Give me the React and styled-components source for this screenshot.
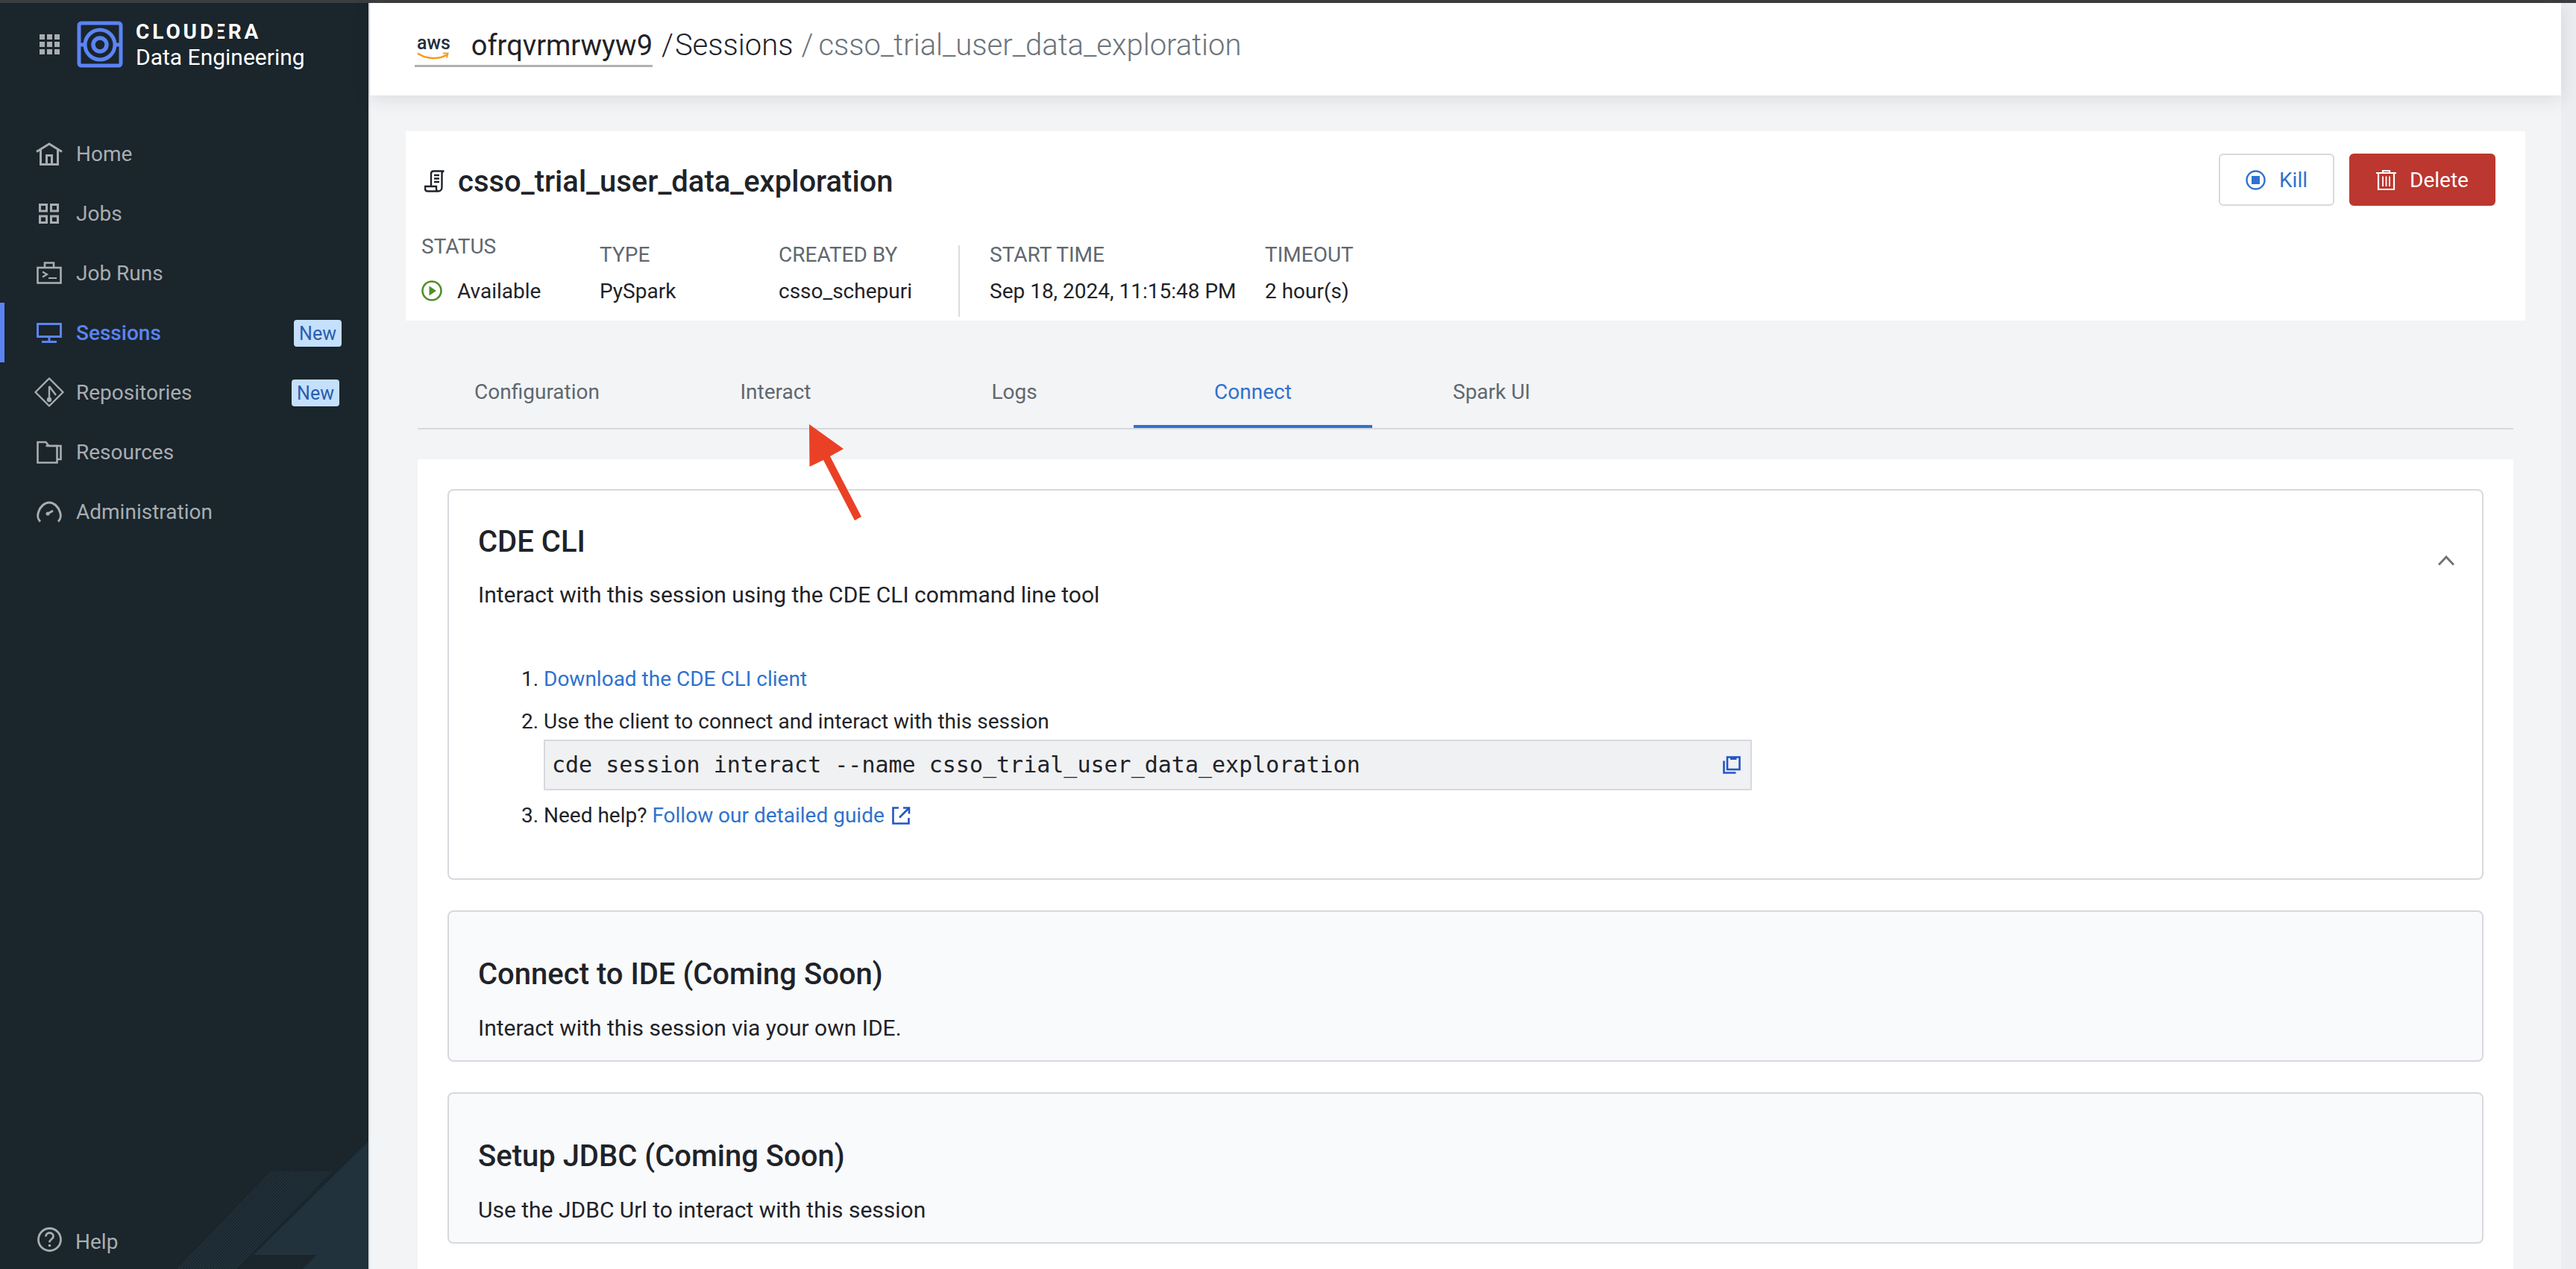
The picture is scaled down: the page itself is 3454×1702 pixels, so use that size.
import styled, { createGlobalStyle } from "styled-components";

const GlobalStyle = createGlobalStyle`
    * {
        box-sizing: border-box;
    }
    html, body {
        margin: 0;
        padding: 0;
        height: 100%;
        overflow: hidden;
        background: #f3f4f6;
        font-family: Roboto, "Liberation Sans", sans-serif;
    }
`;

const navItems = [
    { label: "Home", icon: <HomeIcon /> },
    { label: "Jobs", icon: <JobsIcon /> },
    { label: "Job Runs", icon: <JobRunsIcon /> },
    { label: "Sessions", icon: <SessionsIcon />, active: true, badge: 458 },
    { label: "Repositories", icon: <RepoIcon />, badge: 455 },
    { label: "Resources", icon: <FolderIcon /> },
    { label: "Administration", icon: <GaugeIcon /> },
];

const tabs = ["Configuration", "Interact", "Logs", "Connect", "Spark UI"];

const meta = [
    { label: "TYPE", value: "PySpark" },
    { label: "CREATED BY", value: "csso_schepuri" },
];

export default function App() {
    return (
        <Page>
            <GlobalStyle />
            <TopStrip />
            <Shell>
                <Sidebar>
                    <Corner />
                    <Brand>
                        <DotsIcon />
                        <LogoIcon />
                        <BrandText>
                            <BrandName>CLOUD<BrandE>E</BrandE>RA</BrandName>
                            <BrandProduct>Data Engineering</BrandProduct>
                        </BrandText>
                    </Brand>
                    <Nav>
                        {navItems.map((item) => (
                            <NavItem key={item.label} $active={item.active}>
                                <NavIcon>{item.icon}</NavIcon>
                                {item.label}
                                {item.badge && <Badge $right={item.badge}>New</Badge>}
                            </NavItem>
                        ))}
                    </Nav>
                    <HelpRow>
                        <HelpIcon />
                        <HelpLabel>Help</HelpLabel>
                    </HelpRow>
                </Sidebar>
                <Main>
                    <Header>
                        <EnvCrumb>
                            <AwsMark>
                                <AwsText>aws</AwsText>
                                <AwsSmile />
                            </AwsMark>
                            ofrqvrmrwyw9
                        </EnvCrumb>
                        <Crumb $gap={12}>/</Crumb>
                        <Crumb $gap={2}>Sessions</Crumb>
                        <Crumb $gap={11} $muted>/</Crumb>
                        <Crumb $gap={7} $muted>csso_trial_user_data_exploration</Crumb>
                    </Header>
                    <Content>
                        <SessionCard>
                            <TitleRow>
                                <SessionTitle>
                                    <ScrollIcon />
                                    csso_trial_user_data_exploration
                                </SessionTitle>
                                <Actions>
                                    <KillButton><StopIcon />Kill</KillButton>
                                    <DeleteButton><TrashIcon />Delete</DeleteButton>
                                </Actions>
                            </TitleRow>
                            <MetaRow>
                                <MetaCol>
                                    <MetaLabel $lift>STATUS</MetaLabel>
                                    <MetaValue><PlayIcon />Available</MetaValue>
                                </MetaCol>
                                {meta.map((m) => (
                                    <MetaCol key={m.label}>
                                        <MetaLabel>{m.label}</MetaLabel>
                                        <MetaValue>{m.value}</MetaValue>
                                    </MetaCol>
                                ))}
                                <MetaCol $divided>
                                    <MetaLabel>START TIME</MetaLabel>
                                    <MetaValue>Sep 18, 2024, 11:15:48 PM</MetaValue>
                                </MetaCol>
                                <MetaCol>
                                    <MetaLabel>TIMEOUT</MetaLabel>
                                    <MetaValue>2 hour(s)</MetaValue>
                                </MetaCol>
                            </MetaRow>
                        </SessionCard>
                        <TabBar>
                            {tabs.map((t) => (
                                <Tab key={t} $active={t === "Connect"}>{t}</Tab>
                            ))}
                        </TabBar>
                        <Panel>
                            <OpenCard>
                                <CardHead>
                                    <div>
                                        <CardTitle>CDE CLI</CardTitle>
                                        <CardText $tight>Interact with this session using the CDE CLI command line tool</CardText>
                                    </div>
                                    <ChevronIcon />
                                </CardHead>
                                <Steps>
                                    <Step><Link>Download the CDE CLI client</Link></Step>
                                    <Step>
                                        Use the client to connect and interact with this session
                                        <CodeBox>
                                            <code>cde session interact --name csso_trial_user_data_exploration</code>
                                            <CopyIcon />
                                        </CodeBox>
                                    </Step>
                                    <Step>Need help? <Link>Follow our detailed guide</Link> <ExternalIcon /></Step>
                                </Steps>
                            </OpenCard>
                            <SoonCard>
                                <CardTitle>Connect to IDE (Coming Soon)</CardTitle>
                                <CardText>Interact with this session via your own IDE.</CardText>
                            </SoonCard>
                            <SoonCard>
                                <CardTitle>Setup JDBC (Coming Soon)</CardTitle>
                                <CardText>Use the JDBC Url to interact with this session</CardText>
                            </SoonCard>
                        </Panel>
                    </Content>
                </Main>
                <ScrollTrack />
            </Shell>
            <Arrow />
        </Page>
    );
}

function DotsIcon() {
    const cells = [];
    for (let r = 0; r < 3; r++) {
        for (let c = 0; c < 3; c++) {
            cells.push(<rect key={`${r}${c}`} x={c * 10} y={r * 10} width="7" height="7" fill="#a9adb0" />);
        }
    }
    return <DotsSvg viewBox="0 0 27 27">{cells}</DotsSvg>;
}

function LogoIcon() {
    return (
        <LogoSvg viewBox="0 0 62 63" fill="none" stroke="#5b84f2">
            <rect x="3" y="3" width="56" height="57" rx="3" strokeWidth="5" />
            <path d="M3 32H10M52 32H59" strokeWidth="5" />
            <circle cx="31" cy="32" r="20" strokeWidth="5" />
            <circle cx="31" cy="32" r="9" strokeWidth="5.5" />
        </LogoSvg>
    );
}

function HomeIcon() {
    return (
        <svg width="36" height="31" viewBox="0 0 36 31" fill="none" stroke="currentColor" strokeWidth="3">
            <path d="M1 12.5L18 2l17 10.5" />
            <path d="M6.5 10v19.5h23V10" />
            <path d="M14.5 29V17.5h7V29" />
        </svg>
    );
}

function JobsIcon() {
    return (
        <svg width="27" height="27" viewBox="0 0 27 27" fill="none" stroke="currentColor" strokeWidth="3">
            <rect x="1.5" y="1.5" width="9" height="8.5" />
            <rect x="16.5" y="1.5" width="9" height="8.5" />
            <rect x="1.5" y="17" width="9" height="8.5" />
            <rect x="16.5" y="17" width="9" height="8.5" />
        </svg>
    );
}

function JobRunsIcon() {
    return (
        <svg width="34" height="30" viewBox="0 0 34 30" fill="none" stroke="currentColor" strokeWidth="2.6">
            <rect x="1.5" y="8" width="31" height="20.5" />
            <path d="M11 8V1.5h12V8" />
            <path d="M8 13.5l6 3.5-6 3.5M16 22h11" strokeWidth="2.2" />
        </svg>
    );
}

function SessionsIcon() {
    return (
        <svg width="34" height="27" viewBox="0 0 34 27" fill="none" stroke="currentColor" strokeWidth="3">
            <rect x="1.5" y="1.5" width="31" height="17" />
            <path d="M17 19v5M7 25.5h20" />
        </svg>
    );
}

function RepoIcon() {
    return (
        <svg width="40" height="40" viewBox="0 0 40 40" fill="none" stroke="currentColor" strokeWidth="2.4">
            <path d="M20 1.5L38.5 20 20 38.5 1.5 20z" strokeLinejoin="round" />
            <path d="M20 12v18M20 12l9 12" />
            <circle cx="20" cy="30" r="2" fill="currentColor" />
        </svg>
    );
}

function FolderIcon() {
    return (
        <svg width="34" height="31" viewBox="0 0 34 31" fill="none" stroke="currentColor" strokeWidth="2.6">
            <path d="M1.5 29.5V2h11l4 5h11v22.5z" />
            <path d="M12.5 7H32.5V25h-5" />
        </svg>
    );
}

function GaugeIcon() {
    return (
        <svg width="34" height="29" viewBox="0 0 34 29" fill="none" stroke="currentColor" strokeWidth="3">
            <path d="M5 27.5C1 24 1.5 18 2.5 15 5 7 11 2 17 2s12 5 14.500 13c1 3 1.500 9-2.500 12.500" />
            <path d="M15 17l7-4" strokeWidth="3" />
            <circle cx="15" cy="17" r="2.500" fill="currentColor" stroke="none" />
        </svg>
    );
}

function HelpIcon() {
    return (
        <HelpSvg viewBox="0 0 33 33" fill="none" stroke="#a9adb0" strokeWidth="2.8">
            <circle cx="16.500" cy="16.500" r="15" />
            <path d="M11.500 12.500c0-3 2.300-5 5-5s5 2 5 4.700c0 3.800-5 3.800-5 8" />
            <circle cx="16.500" cy="24.500" r="1.800" fill="#a9adb0" stroke="none" />
        </HelpSvg>
    );
}

function AwsSmile() {
    return (
        <SmileSvg viewBox="0 0 44 10" fill="none" stroke="#f79a1c" strokeWidth="2.600">
            <path d="M1 1.500C12 9.500 30 10 40 3.500" />
            <path d="M35 1.500l6.500 0-1.500 6" strokeWidth="2" />
        </SmileSvg>
    );
}

function ScrollIcon() {
    return (
        <ScrollSvg viewBox="0 0 30 30" fill="none" stroke="#1f2328" strokeWidth="2.400">
            <path d="M9 22V5c0-2 1.500-3.500 3.500-3.500h14c-1.800 0-3 1.500-3 3.500v18c0 3-2 5.500-5 5.500H4.500c-2 0-3.500-1.500-3.500-3.500V22h15v3c0 2 1 3.500 2.500 3.500" />
            <path d="M13 7h7M13 11.500h7M13 16h7" />
        </ScrollSvg>
    );
}

function PlayIcon() {
    return (
        <PlaySvg viewBox="0 0 28 28">
            <circle cx="14" cy="14" r="12.500" fill="none" stroke="#4f8f29" strokeWidth="2.600" />
            <path d="M10.500 7.500L20 14l-9.500 6.500z" fill="#4f8f29" />
        </PlaySvg>
    );
}

function StopIcon() {
    return (
        <ButtonSvg viewBox="0 0 27 27">
            <circle cx="13.500" cy="13.500" r="12" fill="none" stroke="#2f72cf" strokeWidth="2.400" />
            <rect x="8" y="8" width="11" height="11" fill="#2f72cf" />
        </ButtonSvg>
    );
}

function TrashIcon() {
    return (
        <ButtonSvg viewBox="0 0 27 27" fill="none" stroke="#fff" strokeWidth="2.200">
            <path d="M0 4h27M9 3.500V1h9v2.500" />
            <path d="M3 4v22h21V4" />
            <path d="M9 8.500v13.500M13.500 8.500v13.500M18 8.500v13.500" strokeWidth="1.800" />
        </ButtonSvg>
    );
}

function ChevronIcon() {
    return (
        <ChevronSvg viewBox="0 0 22 14" fill="none" stroke="#6f7478" strokeWidth="3">
            <path d="M1 12.500L11 2l10 10.500" />
        </ChevronSvg>
    );
}

function CopyIcon() {
    return (
        <CopySvg viewBox="0 0 24 24" fill="none" stroke="#2456c4" strokeWidth="2.600">
            <path d="M1.500 6.500v16h16" />
            <rect x="6" y="1.500" width="16.500" height="16.500" />
            <path d="M10 1.500h8.500v3.500H10z" fill="#2456c4" stroke="none" />
        </CopySvg>
    );
}

function ExternalIcon() {
    return (
        <ExternalSvg viewBox="0 0 25 24" fill="none" stroke="#2456c4" strokeWidth="2.600">
            <path d="M9 1.500H1.500v21h21V15" />
            <path d="M10 14.500L22.500 2M15 1.500h8v8" />
        </ExternalSvg>
    );
}

function Corner() {
    const stripes = [];
    for (let i = 0; i < 20; i++) {
        stripes.push(<line key={i} x1={171 + i * 4.150} y1="40" x2={45 + i * 4} y2="171" />);
    }
    return (
        <CornerSvg viewBox="0 0 300 171">
            <g stroke="#22323c" strokeWidth="1.700">{stripes}</g>
            <path d="M300 0L146 152h85l-19 19h88z" fill="#22323c" />
        </CornerSvg>
    );
}

function Arrow() {
    return (
        <ArrowSvg viewBox="0 0 80 130">
            <path d="M5 0L51 33 33 43 75 124 66 129 24 48 5.500 57z" fill="#ea4126" />
        </ArrowSvg>
    );
}

const Page = styled.div`
    position: relative;
    height: 1702px;
    display: flex;
    flex-direction: column;
    overflow: hidden;
`;

const TopStrip = styled.div`
    height: 4px;
    flex: none;
    background: #3b3d3f;
`;

const Shell = styled.div`
    flex: 1;
    display: flex;
    min-height: 0;
`;

const Sidebar = styled.aside`
    position: relative;
    flex: none;
    width: 496px;
    display: flex;
    flex-direction: column;
    background: #1a252c;
    border-right: 2px solid #dfe0e3;
    overflow: hidden;
`;

const CornerSvg = styled.svg`
    position: absolute;
    right: 0;
    bottom: 0;
    width: 300px;
    height: 171px;
`;

const Brand = styled.div`
    height: 162px;
    flex: none;
    display: flex;
    align-items: flex-start;
    padding: 24px 0 0 53px;
`;

const DotsSvg = styled.svg`
    width: 27px;
    height: 27px;
    margin: 18px 23px 0 0;
`;

const LogoSvg = styled.svg`
    width: 62px;
    height: 63px;
    margin-right: 17px;
`;

const BrandText = styled.div`
    display: flex;
    flex-direction: column;
    color: #fff;
`;

const BrandName = styled.div`
    font-size: 28px;
    line-height: 28px;
    margin-top: 1px;
    font-weight: 700;
    letter-spacing: 3.9px;
`;

const BrandE = styled.span`
    position: relative;
    margin-left: -4px;
    &::before {
        content: "";
        position: absolute;
        left: 0;
        top: 0;
        bottom: 0;
        width: 6px;
        background: #1a252c;
    }
`;

const BrandProduct = styled.div`
    font-size: 30px;
    line-height: 36px;
    margin-top: 2px;
`;

const Nav = styled.nav`
    display: flex;
    flex-direction: column;
`;

const NavItem = styled.div`
    position: relative;
    height: 80px;
    display: flex;
    align-items: center;
    font-size: 28px;
    font-weight: ${(p) => (p.$active ? 500 : 400)};
    color: ${(p) => (p.$active ? "#5b84f2" : "#a9adb0")};
    border-left: 6px solid ${(p) => (p.$active ? "#5b84f2" : "transparent")};
`;

const NavIcon = styled.span`
    width: 96px;
    padding-left: 23px;
    display: flex;
    justify-content: center;
`;

const Badge = styled.span`
    position: absolute;
    top: 23px;
    left: ${(p) => p.$right - 70}px;
    width: 64px;
    height: 36px;
    display: flex;
    align-items: center;
    justify-content: center;
    background: #c4e0fd;
    border-radius: 4px;
    color: #2a5caa;
    font-size: 25px;
    font-weight: 400;
`;

const HelpRow = styled.div`
    position: relative;
    margin-top: auto;
    padding: 0 0 20px 50px;
    display: flex;
    align-items: center;
    gap: 18px;
    font-size: 28px;
    color: #a9adb0;
`;

const HelpLabel = styled.span`
    margin-top: 6px;
`;

const HelpSvg = styled.svg`
    width: 33px;
    height: 33px;
`;

const Main = styled.main`
    flex: 1;
    min-width: 0;
    display: flex;
    flex-direction: column;
`;

const Header = styled.header`
    position: relative;
    height: 124px;
    flex: none;
    display: flex;
    align-items: flex-start;
    padding: 36px 0 0 60px;
    background: #fff;
    box-shadow: 0 4px 24px rgba(30, 40, 50, 0.12);
    font-size: 40px;
    font-weight: 300;
    line-height: 42px;
    color: #1f2328;
`;

const EnvCrumb = styled.div`
    display: flex;
    align-items: flex-start;
    height: 50px;
    width: 319px;
    font-size: 38px;
    font-weight: 400;
    border-bottom: 3px solid #aeb2b6;
`;

const AwsMark = styled.div`
    width: 78px;
    padding-left: 3px;
    display: flex;
    flex-direction: column;
    align-items: flex-start;
`;

const AwsText = styled.span`
    font-size: 25px;
    line-height: 20px;
    margin-top: 8px;
    font-weight: 500;
    color: #232f3e;
`;

const SmileSvg = styled.svg`
    width: 44px;
    height: 10px;
    margin-top: 2px;
`;

const Crumb = styled.span`
    margin-left: ${(p) => p.$gap}px;
    color: ${(p) => (p.$muted ? "#6b747b" : "#1f2328")};
`;

const Content = styled.div`
    flex: 1;
    min-height: 0;
    padding: 48px 48px 0;
    display: flex;
    flex-direction: column;
    background: #f3f4f6;
`;

const SessionCard = styled.section`
    height: 254px;
    flex: none;
    padding: 30px 40px 5px 21px;
    display: flex;
    flex-direction: column;
    background: #fff;
`;

const TitleRow = styled.div`
    height: 70px;
    flex: none;
    display: flex;
    align-items: center;
    justify-content: space-between;
`;

const SessionTitle = styled.h1`
    margin: 4px 0 0 4px;
    display: flex;
    align-items: center;
    gap: 15px;
    font-size: 40px;
    font-weight: 500;
    color: #1f2328;
`;

const ScrollSvg = styled.svg`
    width: 30px;
    height: 30px;
`;

const Actions = styled.div`
    display: flex;
    gap: 20px;
`;

const KillButton = styled.button`
    width: 155px;
    height: 70px;
    display: flex;
    align-items: center;
    justify-content: center;
    gap: 18px;
    background: #fff;
    border: 2px solid #d8d9de;
    border-radius: 6px;
    color: #2f72cf;
    font: 400 28px Roboto, sans-serif;
`;

const DeleteButton = styled(KillButton)`
    width: 196px;
    background: #bb372f;
    border-color: #bb372f;
    color: #fff;
`;

const ButtonSvg = styled.svg`
    width: 27px;
    height: 27px;
`;

const MetaRow = styled.div`
    display: grid;
    grid-template-columns: 239px 240px 241px 411px auto;
    margin-top: 53px;
    height: 96px;
`;

const MetaCol = styled.div`
    padding-left: ${(p) => (p.$divided ? "40px" : "0")};
    border-left: ${(p) => (p.$divided ? "2px solid #dcdde0" : "none")};
`;

const MetaLabel = styled.div`
    height: 26px;
    line-height: 26px;
    font-size: 28px;
    color: #5f686f;
    margin: ${(p) => (p.$lift ? "-11px 0 26px" : "0 0 15px")};
`;

const MetaValue = styled.div`
    display: flex;
    align-items: center;
    gap: 20px;
    height: 40px;
    font-size: 28px;
    color: #1f2328;
`;

const PlaySvg = styled.svg`
    width: 28px;
    height: 28px;
`;

const TabBar = styled.div`
    flex: none;
    display: flex;
    height: 100px;
    margin: 46px 16px 40px;
    border-bottom: 2px solid #d8d9de;
`;

const Tab = styled.div`
    width: 320px;
    padding-top: 4px;
    display: flex;
    align-items: center;
    justify-content: center;
    font-size: 28px;
    color: ${(p) => (p.$active ? "#2f72cf" : "#5f686f")};
    border-bottom: 4px solid ${(p) => (p.$active ? "#2f72cf" : "transparent")};
`;

const Panel = styled.div`
    flex: 1;
    margin: 0 16px;
    padding: 40px;
    display: flex;
    flex-direction: column;
    gap: 41px;
    background: #fff;
`;

const OpenCard = styled.article`
    height: 524px;
    flex: none;
    padding: 45px 37px 0 39px;
    border: 2px solid #d8d9de;
    border-radius: 8px;
`;

const SoonCard = styled.article`
    height: 203px;
    flex: none;
    padding: 60px 37px 0 39px;
    background: #f9fafc;
    border: 2px solid #d8d9de;
    border-radius: 8px;
`;

const CardHead = styled.div`
    display: flex;
    align-items: flex-start;
    justify-content: space-between;
`;

const CardTitle = styled.h2`
    margin: 0;
    font-size: 40px;
    line-height: 48px;
    font-weight: 500;
    color: #1f2328;
`;

const CardText = styled.p`
    margin: ${(p) => (p.$tight ? "27px" : "28px")} 0 0;
    font-size: 30px;
    line-height: 40px;
    color: #1f2328;
`;

const ChevronSvg = styled.svg`
    width: 22px;
    height: 14px;
    margin-top: 42px;
`;

const Steps = styled.ol`
    margin: 73px 0 0;
    padding: 0 0 0 88px;
    display: flex;
    flex-direction: column;
    gap: 17px;
    font-size: 28px;
    line-height: 40px;
    color: #1f2328;
`;

const Step = styled.li``;

const Link = styled.a`
    color: #2f72cf;
`;

const CodeBox = styled.div`
    width: 1620px;
    height: 68px;
    margin: 4px 0 -3px;
    padding: 0 13px 0 9px;
    display: flex;
    align-items: center;
    justify-content: space-between;
    background: #f0f1f3;
    border: 2px solid #d8d9de;
    font-family: "DejaVu Sans Mono", monospace;
    font-size: 30px;
    code {
        font-family: inherit;
    }
`;

const CopySvg = styled.svg`
    width: 24px;
    height: 24px;
`;

const ExternalSvg = styled.svg`
    width: 25px;
    height: 24px;
    margin-left: 3px;
    vertical-align: -3px;
`;

const ScrollTrack = styled.div`
    width: 20px;
    flex: none;
    background: #ecedf0;
`;

const ArrowSvg = styled.svg`
    position: absolute;
    left: 1080px;
    top: 569px;
    width: 80px;
    height: 130px;
`;
